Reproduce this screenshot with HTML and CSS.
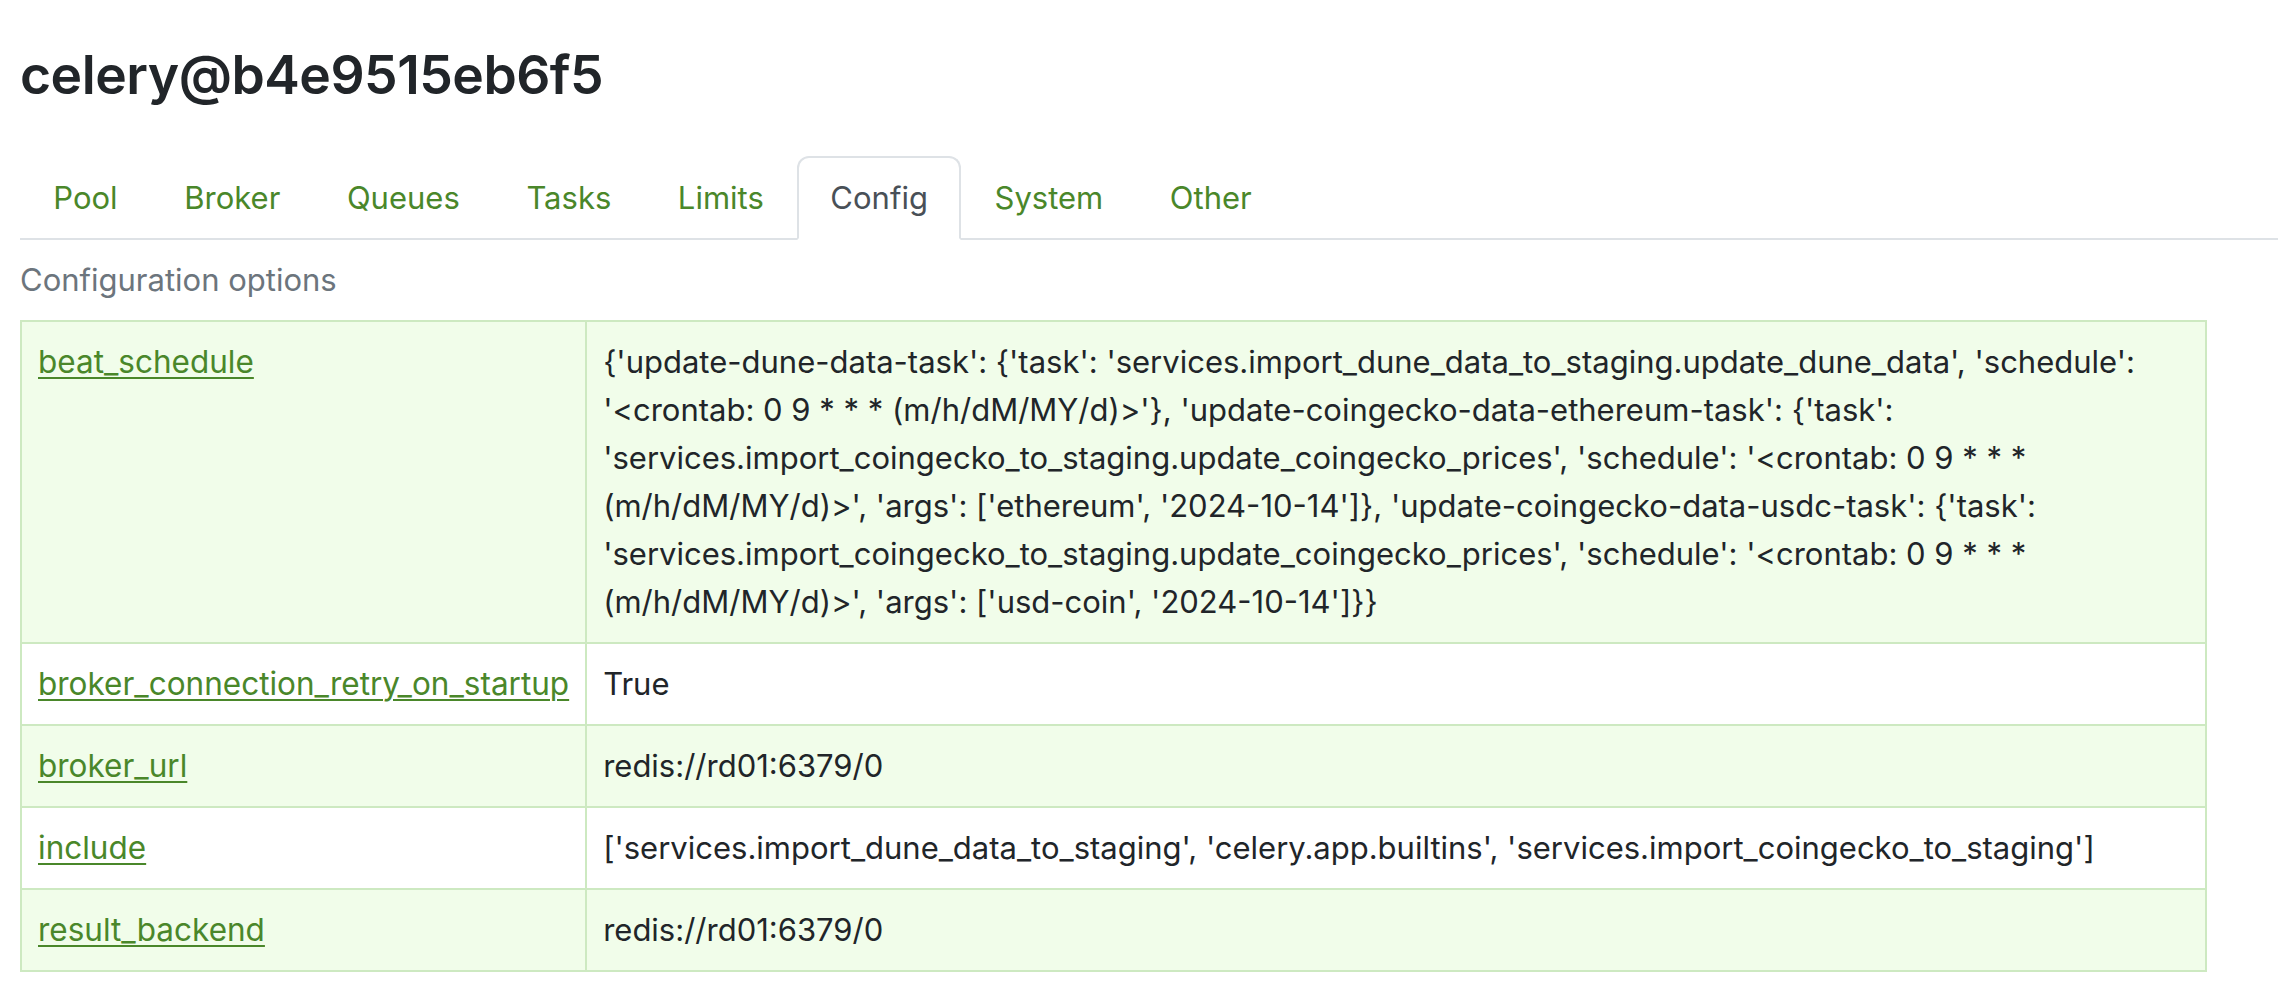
FILE: index.html
```html
<!DOCTYPE html>
<html lang="en">
<head>
<meta charset="utf-8">
<title>celery@b4e9515eb6f5</title>
<link rel="stylesheet" href="styles.css">
</head>
<body>
<div class="page">
  <h2 class="worker-title">celery@b4e9515eb6f5</h2>
  <ul class="tabs">
    <li><a class="tab" href="#">Pool</a></li>
    <li><a class="tab" href="#">Broker</a></li>
    <li><a class="tab" href="#">Queues</a></li>
    <li><a class="tab" href="#">Tasks</a></li>
    <li><a class="tab" href="#">Limits</a></li>
    <li><a class="tab active" href="#">Config</a></li>
    <li><a class="tab" href="#">System</a></li>
    <li><a class="tab" href="#">Other</a></li>
  </ul>
  <table class="config">
    <caption>Configuration options</caption>
    <tbody>
      <tr class="odd">
        <td class="key"><a href="#">beat_schedule</a></td>
        <td class="val">{'update-dune-data-task': {'task': 'services.import_dune_data_to_staging.update_dune_data', 'schedule': '&lt;crontab: 0 9 * * * (m/h/dM/MY/d)&gt;'}, 'update-coingecko-data-ethereum-task': {'task': 'services.import_coingecko_to_staging.update_coingecko_prices', 'schedule': '&lt;crontab: 0 9 * * * (m/h/dM/MY/d)&gt;', 'args': ['ethereum', '2024-10-14']}, 'update-coingecko-data-usdc-task': {'task': 'services.import_coingecko_to_staging.update_coingecko_prices', 'schedule': '&lt;crontab: 0 9 * * * (m/h/dM/MY/d)&gt;', 'args': ['usd-coin', '2024-10-14']}}</td>
      </tr>
      <tr>
        <td class="key"><a href="#">broker_connection_retry_on_startup</a></td>
        <td class="val">True</td>
      </tr>
      <tr class="odd">
        <td class="key"><a href="#">broker_url</a></td>
        <td class="val">redis://rd01:6379/0</td>
      </tr>
      <tr>
        <td class="key"><a href="#">include</a></td>
        <td class="val">['services.import_dune_data_to_staging', 'celery.app.builtins', 'services.import_coingecko_to_staging']</td>
      </tr>
      <tr class="odd">
        <td class="key"><a href="#">result_backend</a></td>
        <td class="val">redis://rd01:6379/0</td>
      </tr>
    </tbody>
  </table>
</div>
</body>
</html>
```

FILE: styles.css
```css
html, body {
  margin: 0;
  padding: 0;
  background: #ffffff;
}

body {
  font-family: Inter, "Liberation Sans", Arial, sans-serif;
  font-size: 31px;
  line-height: 48px;
  color: #212529;
}

.page {
  padding: 41px 0 0 20px;
}

.worker-title {
  margin: 0 0 47px 0;
  font-size: 53.4px;
  font-weight: 600;
  line-height: 68px;
  color: #212529;
  letter-spacing: -0.5px;
}

.tabs {
  display: flex;
  list-style: none;
  margin: 0;
  padding: 0;
  border-bottom: 2px solid #dee2e6;
}

.tabs li {
  margin-bottom: -2px;
}

.tab {
  display: block;
  padding: 16px 31.3px;
  border: 2px solid transparent;
  border-top-left-radius: 12px;
  border-top-right-radius: 12px;
  color: #4a872a;
  text-decoration: none;
}

.tab.active {
  color: #495057;
  background: #ffffff;
  border-color: #dee2e6 #dee2e6 #ffffff;
}

.config {
  width: calc(100% - 71px);
  border-collapse: collapse;
  border: 2px solid #cde9c1;
}

.config caption {
  caption-side: top;
  text-align: left;
  padding: 16px 0;
  color: #6c757d;
}

.config td {
  padding: 16px 16px;
  border: 2px solid #cde9c1;
  vertical-align: top;
  background: #ffffff;
}

.config tr.odd td {
  background: #f1fdea;
}

.key {
  white-space: nowrap;
  width: 1%;
}

.key a {
  font-size: 31.5px;
  color: #4a872a;
  text-decoration: underline;
  text-decoration-thickness: 2px;
  text-underline-offset: 4px;
}

.val {
  color: #212529;
}
```
